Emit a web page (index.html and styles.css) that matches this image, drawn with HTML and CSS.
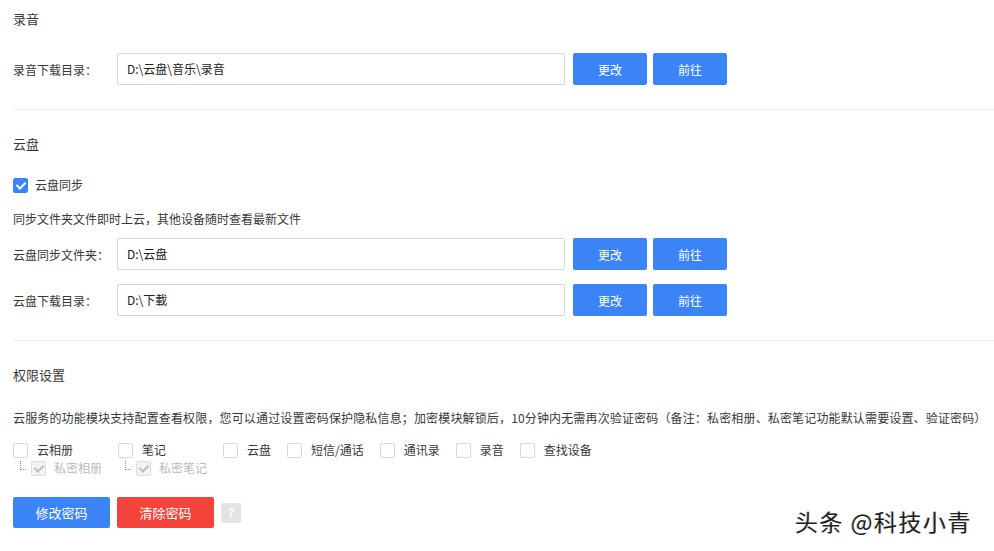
FILE: index.html
```html
<!DOCTYPE html>
<html lang="zh-CN">
<head>
  <meta charset="UTF-8">
  <title>设置</title>
  <link rel="stylesheet" href="styles.css">
</head>
<body>
  <div class="settings">
    <section class="block">
      <h2>录音</h2>
      <div class="field first">
        <label>录音下载目录：</label>
        <div class="path">D:\云盘\音乐\录音</div>
        <button class="btn btn-blue">更改</button>
        <button class="btn btn-blue">前往</button>
      </div>
    </section>

    <section class="block">
      <h2>云盘</h2>
      <div class="check-line">
        <span class="box checked"></span>
        <span>云盘同步</span>
      </div>
      <p class="desc sync-desc">同步文件夹文件即时上云，其他设备随时查看最新文件</p>
      <div class="field tight">
        <label>云盘同步文件夹：</label>
        <div class="path">D:\云盘</div>
        <button class="btn btn-blue">更改</button>
        <button class="btn btn-blue">前往</button>
      </div>
      <div class="field">
        <label>云盘下载目录：</label>
        <div class="path">D:\下載</div>
        <button class="btn btn-blue">更改</button>
        <button class="btn btn-blue">前往</button>
      </div>
    </section>

    <section class="block last">
      <h2>权限设置</h2>
      <p class="desc perm-desc">云服务的功能模块支持配置查看权限，您可以通过设置密码保护隐私信息；加密模块解锁后，10分钟内无需再次验证密码（备注：私密相册、私密笔记功能默认需要设置、验证密码）</p>
      <div class="perm-row">
        <div class="perm wide"><span class="box"></span>云相册</div>
        <div class="perm wide"><span class="box"></span>笔记</div>
        <div class="perm"><span class="box"></span>云盘</div>
        <div class="perm"><span class="box"></span>短信/通话</div>
        <div class="perm"><span class="box"></span>通讯录</div>
        <div class="perm"><span class="box"></span>录音</div>
        <div class="perm"><span class="box"></span>查找设备</div>
      </div>
      <div class="sub-row">
        <div class="sub"><span class="tree"></span><span class="box disabled"></span>私密相册</div>
        <div class="sub"><span class="tree"></span><span class="box disabled"></span>私密笔记</div>
      </div>
      <div class="actions">
        <button class="btn btn-blue wide-btn">修改密码</button>
        <button class="btn btn-red wide-btn">清除密码</button>
        <span class="help">?</span>
      </div>
    </section>
  </div>

  <div class="watermark">头条 @科技小青</div>
</body>
</html>
```

FILE: styles.css
```css
body {
  margin: 0;
  font-family: "Noto Sans CJK SC", "Noto Sans", sans-serif;
  font-size: 12px;
  color: #383838;
  background-color: #fff;
}

.settings {
  padding-left: 13px;
}

.block {
  border-bottom: 1px solid #eeeeee;
  padding-bottom: 24px;
}

.block.last {
  border-bottom: none;
}

.block h2 {
  margin: 0;
  padding-top: 9px;
  font-size: 13px;
  font-weight: normal;
  line-height: 20px;
}

.block + .block h2 {
  padding-top: 24px;
}

.field {
  display: flex;
  align-items: center;
  height: 32px;
  margin-top: 14px;
}

.field.first {
  margin-top: 24px;
}

.field.tight {
  margin-top: 10px;
}

.field label {
  width: 104px;
  flex-shrink: 0;
}

.path {
  width: 437px;
  height: 30px;
  line-height: 30px;
  padding-left: 9px;
  border: 1px solid #d6d6d6;
  border-radius: 2px;
  color: #222;
}

.btn {
  border: none;
  border-radius: 2px;
  color: #fff;
  font-family: inherit;
  font-size: 12px;
  cursor: pointer;
}

.field .btn {
  width: 74px;
  height: 32px;
  margin-left: 6px;
}

.field .path + .btn {
  margin-left: 8px;
}

.btn-blue {
  background-color: #3b84f6;
}

.btn-red {
  background-color: #f4433a;
}

.check-line {
  display: flex;
  align-items: center;
  gap: 7px;
  margin-top: 22px;
  line-height: 18px;
}

.box {
  display: inline-block;
  position: relative;
  width: 13px;
  height: 13px;
  border: 1px solid #d9d9d9;
  border-radius: 2px;
  background-color: #fff;
  flex-shrink: 0;
}

.box.checked {
  background-color: #3b84f6;
  border-color: #3b84f6;
}

.box.checked::after,
.box.disabled::after {
  content: "";
  position: absolute;
  left: 4px;
  top: 1px;
  width: 4px;
  height: 7px;
  border: solid #fff;
  border-width: 0 2px 2px 0;
  transform: rotate(45deg);
}

.box.disabled {
  background-color: #f3f3f3;
  border-color: #dcdcdc;
}

.box.disabled::after {
  border-color: #bdbdbd;
}

.desc {
  margin: 0;
  line-height: 18px;
}

.sync-desc {
  margin-top: 16px;
}

.perm-desc {
  margin-top: 24px;
  letter-spacing: 0.15px;
}

.perm-row {
  display: flex;
  align-items: center;
  gap: 16px;
  margin-top: 14px;
  line-height: 18px;
}

.perm {
  display: flex;
  align-items: center;
  gap: 9px;
}

.perm.wide {
  width: 89px;
}

.sub-row {
  display: flex;
  line-height: 18px;
}

.sub {
  display: flex;
  align-items: center;
  width: 105px;
  color: #bbb;
}

.tree {
  width: 5px;
  height: 8px;
  margin: 0 5px 0 7px;
  border-left: 1px dotted #888;
  border-bottom: 1px dotted #888;
  align-self: flex-start;
  margin-top: 2px;
}

.sub .box {
  margin-right: 8px;
}

.actions {
  display: flex;
  align-items: center;
  gap: 7px;
  margin-top: 20px;
}

.wide-btn {
  width: 97px;
  height: 31px;
  font-size: 13px;
}

.help {
  width: 20px;
  height: 20px;
  line-height: 20px;
  text-align: center;
  border-radius: 2px;
  background-color: #e4e4e4;
  color: #fff;
  font-weight: bold;
  font-size: 12px;
}

.watermark {
  position: absolute;
  left: 795px;
  top: 504px;
  font-size: 23px;
  color: #1e1e1e;
  text-shadow: 1px 1px 0 #fff, -1px 0 0 #ccc;
  letter-spacing: 1.5px;
}
```
